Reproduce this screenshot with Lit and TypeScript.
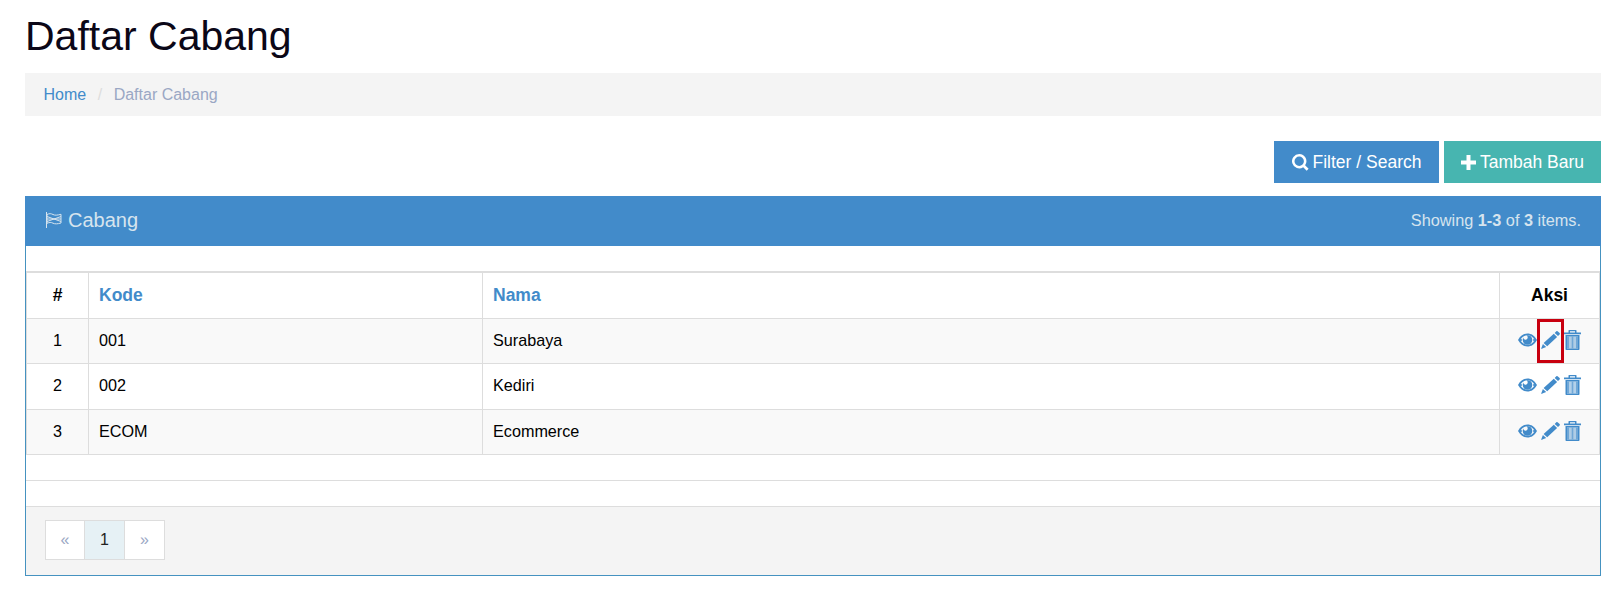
import { LitElement, html, css, svg } from "lit";
import { customElement } from "lit/decorators.js";

const eye = html`<svg width="19" height="14" viewBox="0 0 19 14">${svg`<path fill-rule="evenodd" d="M0 7C2.500 2.500 5.800.5 9.500.5S16.500 2.500 19 7c-2.500 4.500-5.800 6.500-9.500 6.500S2.500 11.500 0 7zM2 7c2 3 4.500 4.700 7.500 4.700S15 10 17 7c-2-3-4.500-4.700-7.500-4.700S4 4 2 7z"/><path d="M9.500 2.200a5 5 0 0 1 4.800 4.800 4.800 4.800 0 0 1-9.600 0c0-.9.200-1.700.6-2.400.1 1.300 1 2.200 2.200 2.200 1.300 0 2.200-1 2.200-2.200 0-1-.5-1.800-1.200-2.300z"/><path d="M1.500 7 3 5.300 4 7 3 8.700z"/><path d="M17.500 7 16 5.300 15 7l1 1.700z"/>`}</svg>`;
const pencil = html`<svg width="19" height="18" viewBox="0 0 19 18">${svg`<path d="M15.300.3a1 1 0 0 1 1.300 0l2 1.800a1 1 0 0 1 0 1.300l-1.600 1.600-3.300-3.100zM12.800 2.800l3.300 3.100L6.200 15.200 2.600 12.100zM1.900 13l3.300 3L0 18z"/>`}</svg>`;
const trash = html`<svg width="17" height="20" viewBox="0 0 17 20">${svg`<path fill-rule="evenodd" d="M4.500 2.500V.5A.5.5 0 0 1 5 0h7a.5.5 0 0 1 .5.500v2H17v1.700H0V2.500zM6 2.500h5V1.300H6zM1.500 5h14v14c0 .6-.4 1-1 1h-12c-.6 0-1-.4-1-1zm1.500 1.500v12h11v-12z"/><path opacity=".75" d="M3 6.500h2v12H3zM7.500 6.500h2v12h-2zM12 6.500h2v12h-2z"/><path opacity=".4" d="M5 6.500h2.500v12H5zM9.500 6.500H12v12H9.500z"/>`}</svg>`;

@customElement("app-root")
export class AppRoot extends LitElement {
  static styles = css`
    :host { display: block; font-family: "Liberation Sans", Arial, sans-serif; color: #000; background: #fff; height: 601px; overflow: hidden; }
    .page { padding: 0 21px 0 25px; }
    h1 { margin: 0; font-weight: 400; font-size: 41px; line-height: 43px; height: 73px; padding-top: 15px; box-sizing: border-box; color: #0b0717; }
    .crumb { display: flex; align-items: center; gap: 11.500px; height: 43px; background: #f4f4f4; padding: 0 18.500px; font-size: 16px; color: #9aa7c4; margin-bottom: 25px; }
    .crumb a { color: #428bca; }
    .crumb i { font-style: normal; color: #ddd; }
    .actions { display: flex; justify-content: flex-end; gap: 5px; margin-bottom: 13px; }
    .btn { display: flex; align-items: center; justify-content: center; gap: 4px; height: 42px; color: #fff; font-size: 17.500px; box-sizing: border-box; }
    .btn svg { fill: #fff; }
    .blue { width: 165px; background: #428bca; }
    .teal { width: 157px; background: #47b5b0; }
    .panel { border: 1px solid #4592c0; border-top: 0; }
    .head { margin: 0 -1px; height: 50px; background: #428bca; display: flex; align-items: center; justify-content: space-between; padding: 0 20px 2px; box-sizing: border-box; color: #d6e4ee; }
    .title { display: flex; align-items: center; gap: 5px; font-size: 20px; }
    .summary { font-size: 16.300px; }
    .body { padding-top: 25px; }
    table { width: 100%; border-collapse: collapse; table-layout: fixed; font-size: 16.200px; border-top: 2px solid #ddd; }
    th, td { border: 1px solid #ddd; padding: 0 10px; height: 45px; box-sizing: border-box; text-align: left; font-weight: 400; }
    th { font-weight: 700; height: 46px; font-size: 17.500px; }
    th.c, td.c { text-align: center; padding: 0; }
    th a { color: #428bca; }
    tbody tr:nth-child(odd) { background: #f9f9f9; }
    tbody tr:nth-child(2) td { height: 46px; padding-bottom: 2px; }
    .ic { display: inline-flex; gap: 4px; align-items: center; fill: #428bca; vertical-align: middle; margin-top: -2px; }
    .ic svg { display: block; }
    .pen { position: relative; display: block; }
    .mark { position: absolute; left: -4px; top: -12px; width: 27px; height: 44px; border: 3px solid #c8000f; box-sizing: border-box; }
    .spacer { height: 26px; border-bottom: 1px solid #ddd; box-sizing: border-box; }
    .foot { background: #f4f4f4; height: 68px; padding: 13px 19px 0; box-sizing: border-box; }
    .pager { display: inline-flex; border: 1px solid #ddd; height: 40px; box-sizing: border-box; font-size: 16px; }
    .pager span { display: flex; width: 38px; align-items: center; justify-content: center; background: #fff; color: #9aa7c4; }
    .pager span + span { width: 39px; border-left: 1px solid #ddd; }
    .pager .on { background: #e6f1f5; color: #222; }
    .col1 { width: 62px; } .col2 { width: 394px; } .col4 { width: 100px; }
  `;

  private rows = [["1", "001", "Surabaya"], ["2", "002", "Kediri"], ["3", "ECOM", "Ecommerce"]];

  render() {
    return html`<div class="page">
      <h1>Daftar Cabang</h1>
      <div class="crumb"><a>Home</a><i>/</i><span>Daftar Cabang</span></div>
      <div class="actions">
        <div class="btn blue"><svg width="17" height="17" viewBox="0 0 17 17"><path fill-rule="evenodd" d="M7.200 0a7.200 7.200 0 0 1 5.900 11.300l3.500 3.500-1.900 1.900-3.500-3.500A7.200 7.200 0 1 1 7.200 0zm0 2.500a4.700 4.700 0 1 0 0 9.400 4.700 4.700 0 0 0 0-9.400z"/></svg>Filter / Search</div>
        <div class="btn teal"><svg width="15" height="15" viewBox="0 0 15 15"><path d="M5.500 0h4v5.500H15v4H9.500V15h-4V9.500H0v-4h5.500z"/></svg>Tambah Baru</div>
      </div>
      <div class="panel">
        <div class="head">
          <div class="title"><svg width="18" height="16" viewBox="0 0 18 16" fill="none" stroke="#d6e4ee" stroke-width="1"><path d="M1.500 0v16"/><path d="M2 2.500c2.500-1.200 4-1 6 0s4 .8 8-.2V11c-3.500 1-6 1.200-8 .2s-3.500-1-6 .1z"/><path d="M2 4.500l14 5M16 4.500 2 9.500M2 7h14"/></svg>Cabang</div>
          <div class="summary">Showing <b>1-3</b> of <b>3</b> items.</div>
        </div>
        <div class="body">
          <table>
            <thead><tr><th class="c col1">#</th><th class="col2"><a>Kode</a></th><th><a>Nama</a></th><th class="c col4">Aksi</th></tr></thead>
            <tbody>
              ${this.rows.map((r, i) => html`<tr><td class="c">${r[0]}</td><td>${r[1]}</td><td>${r[2]}</td><td class="c"><span class="ic">${eye}<span class="pen">${pencil}${i === 0 ? html`<span class="mark"></span>` : ""}</span>${trash}</span></td></tr>`)}
            </tbody>
          </table>
          <div class="spacer"></div>
          <div class="spacer"></div>
        </div>
        <div class="foot"><div class="pager"><span>«</span><span class="on">1</span><span>»</span></div></div>
      </div>
    </div>`;
  }
}
